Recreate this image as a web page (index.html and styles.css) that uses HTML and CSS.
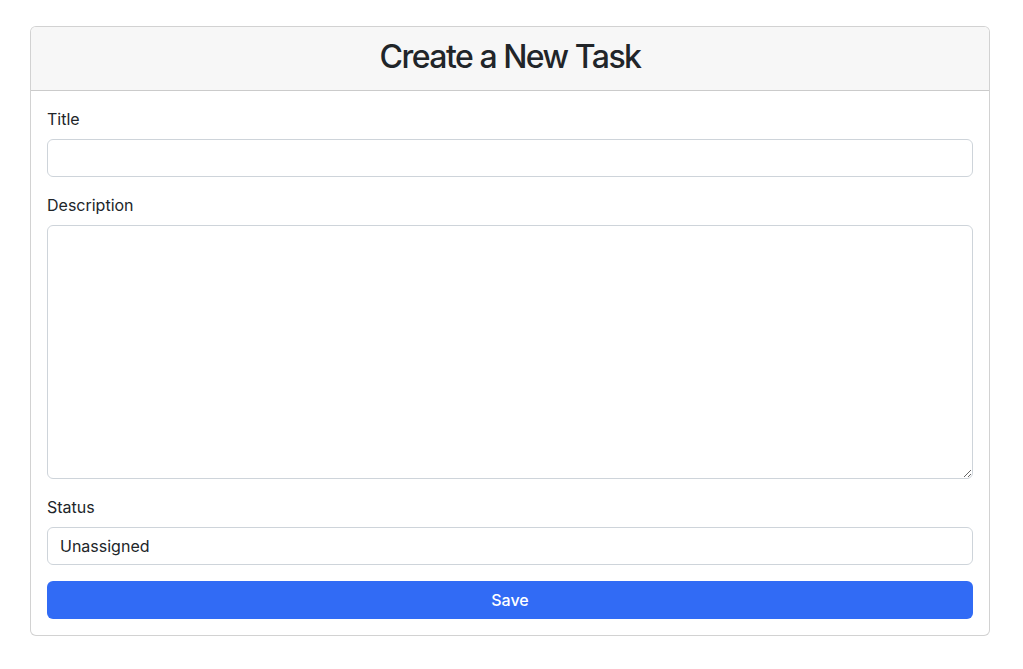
FILE: index.html
```html
<!DOCTYPE html>
<html lang="en">
<head>
<meta charset="utf-8">
<title>Create a New Task</title>
<link rel="stylesheet" href="styles.css">
</head>
<body>
<div class="page">
  <div class="card">
    <div class="card-header">
      <h2 class="card-title">Create a New Task</h2>
    </div>
    <form class="card-body">
      <div class="field">
        <label class="label" for="title">Title</label>
        <input class="control" id="title" type="text">
      </div>
      <div class="field">
        <label class="label" for="desc">Description</label>
        <textarea class="control textarea" id="desc"></textarea>
      </div>
      <div class="field">
        <label class="label" for="status">Status</label>
        <select class="control select" id="status">
          <option>Unassigned</option>
        </select>
      </div>
      <button class="btn" type="button">Save</button>
    </form>
  </div>
</div>
</body>
</html>
```

FILE: styles.css
```css
* { box-sizing: border-box; }
html, body { margin: 0; padding: 0; background: #fff; }
body {
  font-family: Inter, "Liberation Sans", sans-serif;
  color: #212529;
  font-size: 16px;
  line-height: 24px;
}
.page {
  padding: 26px 33px 0 30px;
}
.card {
  width: 960px;
  border: 1px solid rgba(0, 0, 0, 0.175);
  border-radius: 6px;
  background: #fff;
  overflow: hidden;
}
.card-header {
  background: #f7f7f7;
  border-bottom: 1px solid rgba(0, 0, 0, 0.175);
  height: 64px;
  padding-bottom: 4px;
  display: flex;
  align-items: center;
  justify-content: center;
}
.card-title {
  margin: 0;
  font-size: 32px;
  font-weight: 500;
  line-height: 38px;
  letter-spacing: -1.5px;
}
.card-body {
  padding: 16px;
  display: flex;
  flex-direction: column;
  gap: 16px;
}
.field { display: flex; flex-direction: column; }
.label {
  display: block;
  margin-bottom: 8px;
  font-size: 16px;
  line-height: 24px;
}
.control {
  display: block;
  width: 100%;
  height: 38px;
  padding: 6px 12px;
  font-family: inherit;
  font-size: 16px;
  line-height: 24px;
  color: #212529;
  background: #fff;
  border: 1px solid #ced4da;
  border-radius: 6px;
  outline: none;
  margin: 0;
}
.textarea {
  height: 254px;
  resize: vertical;
}
.select {
  appearance: none;
  -webkit-appearance: none;
}
.btn {
  display: block;
  width: 100%;
  height: 38px;
  border: none;
  border-radius: 6px;
  background: #316bf5;
  color: #fff;
  font-family: inherit;
  font-size: 16px;
  font-weight: 500;
  line-height: 24px;
  cursor: pointer;
}
```
